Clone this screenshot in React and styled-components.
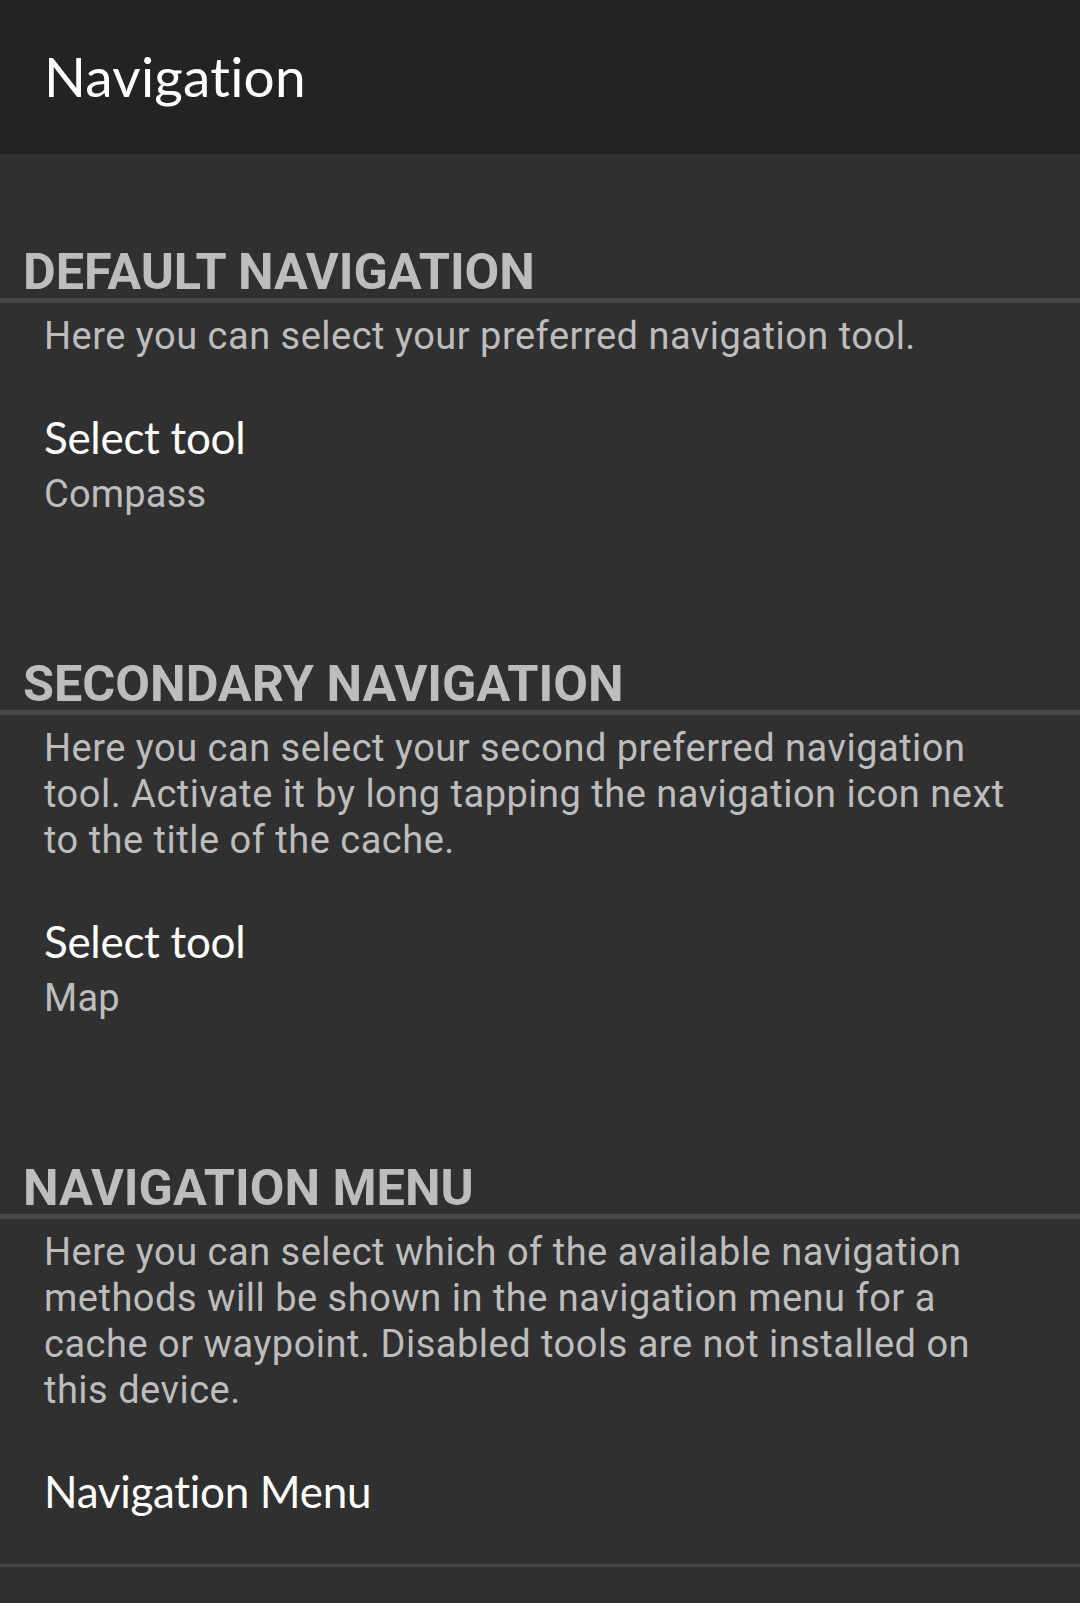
import React from "react";
import styled, { createGlobalStyle } from "styled-components";

const Global = createGlobalStyle`
  html, body {
    margin: 0;
    padding: 0;
    background: #303030;
  }
  * { box-sizing: border-box; }
`;

const Screen = styled.div`
  width: 1080px;
  min-height: 1603px;
  background: #303030;
  display: flex;
  flex-direction: column;
`;

const AppBar = styled.header`
  height: 154px;
  background: #232323;
  display: flex;
  align-items: flex-start;
  padding: 43px 0 0 44px;
`;

const AppTitle = styled.h1`
  margin: 0;
  font-family: Lato, "Open Sans", sans-serif;
  font-weight: 400;
  font-size: 55px;
  line-height: 66px;
  letter-spacing: 0.2px;
  font-variant-ligatures: none;
  color: #ffffff;
`;

const List = styled.main`
  display: flex;
  flex-direction: column;
`;

const Category = styled.section`
  display: flex;
  flex-direction: column;
  padding-top: 94px;
  &:first-of-type {
    padding-top: 92px;
  }
`;

const CategoryTitle = styled.h2`
  margin: 0;
  padding-left: 23px;
  font-family: Roboto, "Liberation Sans", sans-serif;
  font-weight: 700;
  font-size: 50.4px;
  line-height: 52px;
  color: #bdbdbd;
  border-bottom: 5px solid #484848;
`;

const Description = styled.p`
  margin: 0;
  padding: 10px 50px 0 44px;
  font-family: Roboto, "Liberation Sans", sans-serif;
  font-size: 38px;
  line-height: 46px;
  letter-spacing: 0.5px;
  color: #bdbdbd;
`;

const Item = styled.div`
  display: flex;
  flex-direction: column;
  padding: 52px 44px 47px;
  border-bottom: ${(p) => (p.$last ? "3px solid #454545" : "none")};
`;

const ItemTitle = styled.div`
  font-family: Lato, "Open Sans", sans-serif;
  font-size: 44px;
  line-height: 52px;
  letter-spacing: -0.3px;
  font-variant-ligatures: none;
  color: #ffffff;
`;

const ItemSummary = styled.div`
  margin-top: 8px;
  font-family: Roboto, "Liberation Sans", sans-serif;
  font-size: 38px;
  line-height: 46px;
  letter-spacing: 0.2px;
  color: #bdbdbd;
`;

const sections = [
  {
    title: "DEFAULT NAVIGATION",
    desc: "Here you can select your preferred navigation tool.",
    item: "Select tool",
    summary: "Compass",
  },
  {
    title: "SECONDARY NAVIGATION",
    desc: "Here you can select your second preferred navigation tool. Activate it by long tapping the navigation icon next to the title of the cache.",
    item: "Select tool",
    summary: "Map",
  },
  {
    title: "NAVIGATION MENU",
    desc: "Here you can select which of the available navigation methods will be shown in the navigation menu for a cache or waypoint. Disabled tools are not installed on this device.",
    item: "Navigation Menu",
    last: true,
  },
];

export default function App() {
  return (
    <>
      <Global />
      <Screen>
        <AppBar>
          <AppTitle>Navigation</AppTitle>
        </AppBar>
        <List>
          {sections.map((s) => (
            <Category key={s.title}>
              <CategoryTitle>{s.title}</CategoryTitle>
              <Description>{s.desc}</Description>
              <Item $last={s.last}>
                <ItemTitle>{s.item}</ItemTitle>
                {s.summary && <ItemSummary>{s.summary}</ItemSummary>}
              </Item>
            </Category>
          ))}
        </List>
      </Screen>
    </>
  );
}
